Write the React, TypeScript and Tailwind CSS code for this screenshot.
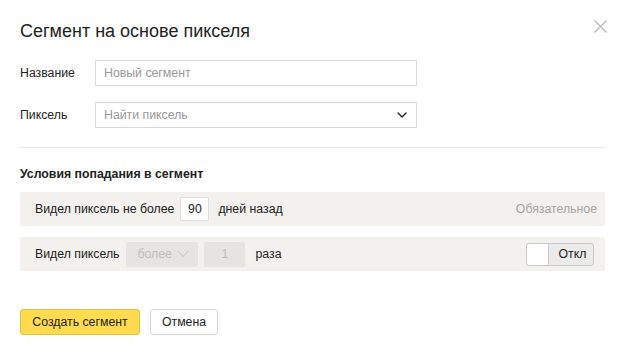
import { ChevronDown } from 'lucide-react'

export default function App() {
  return (
    <div className="relative w-[628px] h-[354px] bg-white px-[20px] pt-[20px] text-[12.3px] text-[#222] font-['Liberation_Sans',Arial,sans-serif]">
      <button className="absolute left-[594px] top-[20px] text-[#b8b8b8]">
        <svg width="13" height="13" viewBox="0 0 13 13" fill="none" stroke="currentColor" strokeWidth="1.3">
          <path d="M0.5 0.5 L12.5 12.5 M12.5 0.5 L0.5 12.5" />
        </svg>
      </button>

      <h2 className="text-[18px] leading-[22px] text-[#222]">Сегмент на основе пикселя</h2>

      <div className="mt-[18px] flex items-center">
        <div className="w-[75px] leading-[16px]">Название</div>
        <div className="w-[322px] h-[26px] border border-[#d9d9d9] flex items-center px-[8px] text-[#999]">
          Новый сегмент
        </div>
      </div>

      <div className="mt-[16px] flex items-center">
        <div className="w-[75px] leading-[16px]">Пиксель</div>
        <div className="w-[322px] h-[26px] border border-[#d9d9d9] flex items-center justify-between pl-[8px] pr-[6px] text-[#999]">
          <span>Найти пиксель</span>
          <ChevronDown size={16} strokeWidth={2} className="text-[#222]" />
        </div>
      </div>

      <div className="mt-[19px] h-px bg-[#ebebeb] w-[585px]" />

      <div className="mt-[18px] font-bold leading-[16px]">Условия попадания в сегмент</div>

      <div className="mt-[10px] w-[585px] h-[34px] bg-[#f2f1ee] rounded-[2px] flex items-center pl-[15px] pr-[8px]">
        <span>Видел пиксель не более</span>
        <div className="ml-[6px] w-[29px] h-[24px] bg-white border border-[#dcdcdc] rounded-[2px] flex items-center justify-center">90</div>
        <span className="ml-[9px]">дней назад</span>
        <span className="ml-auto text-[#a6a6a6]">Обязательное</span>
      </div>

      <div className="mt-[11px] w-[585px] h-[34px] bg-[#f2f1ee] rounded-[2px] flex items-center pl-[15px] pr-[11px]">
        <span>Видел пиксель</span>
        <div className="ml-[7px] w-[72px] h-[25px] bg-[#e5e4e1] rounded-[2px] flex items-center pl-[11px] text-[#bfbebb]">
          <span>более</span>
          <ChevronDown size={20} strokeWidth={1.1} className="ml-[1px]" />
        </div>
        <div className="ml-[6px] w-[41px] h-[25px] bg-[#e5e4e1] rounded-[2px] flex items-center justify-center text-[#bfbebb]">1</div>
        <span className="ml-[10px]">раза</span>
        <div className="ml-auto w-[68px] h-[23px] border border-[#c9c9c9] rounded-[3px] bg-[#ebebea] flex items-center overflow-hidden">
          <div className="w-[22px] h-full bg-white border-r border-[#c9c9c9] rounded-[2px]" />
          <span className="flex-1 text-center pl-[3px]">Откл</span>
        </div>
      </div>

      <div className="mt-[38px] flex gap-[10px]">
        <button className="w-[120px] h-[26px] bg-[#ffdb4d] border border-[#e6c33d] rounded-[3px] text-[#222]">
          Создать сегмент
        </button>
        <button className="w-[68px] h-[26px] bg-white border border-[#d9d9d9] rounded-[3px] text-[#222]">
          Отмена
        </button>
      </div>
    </div>
  )
}
